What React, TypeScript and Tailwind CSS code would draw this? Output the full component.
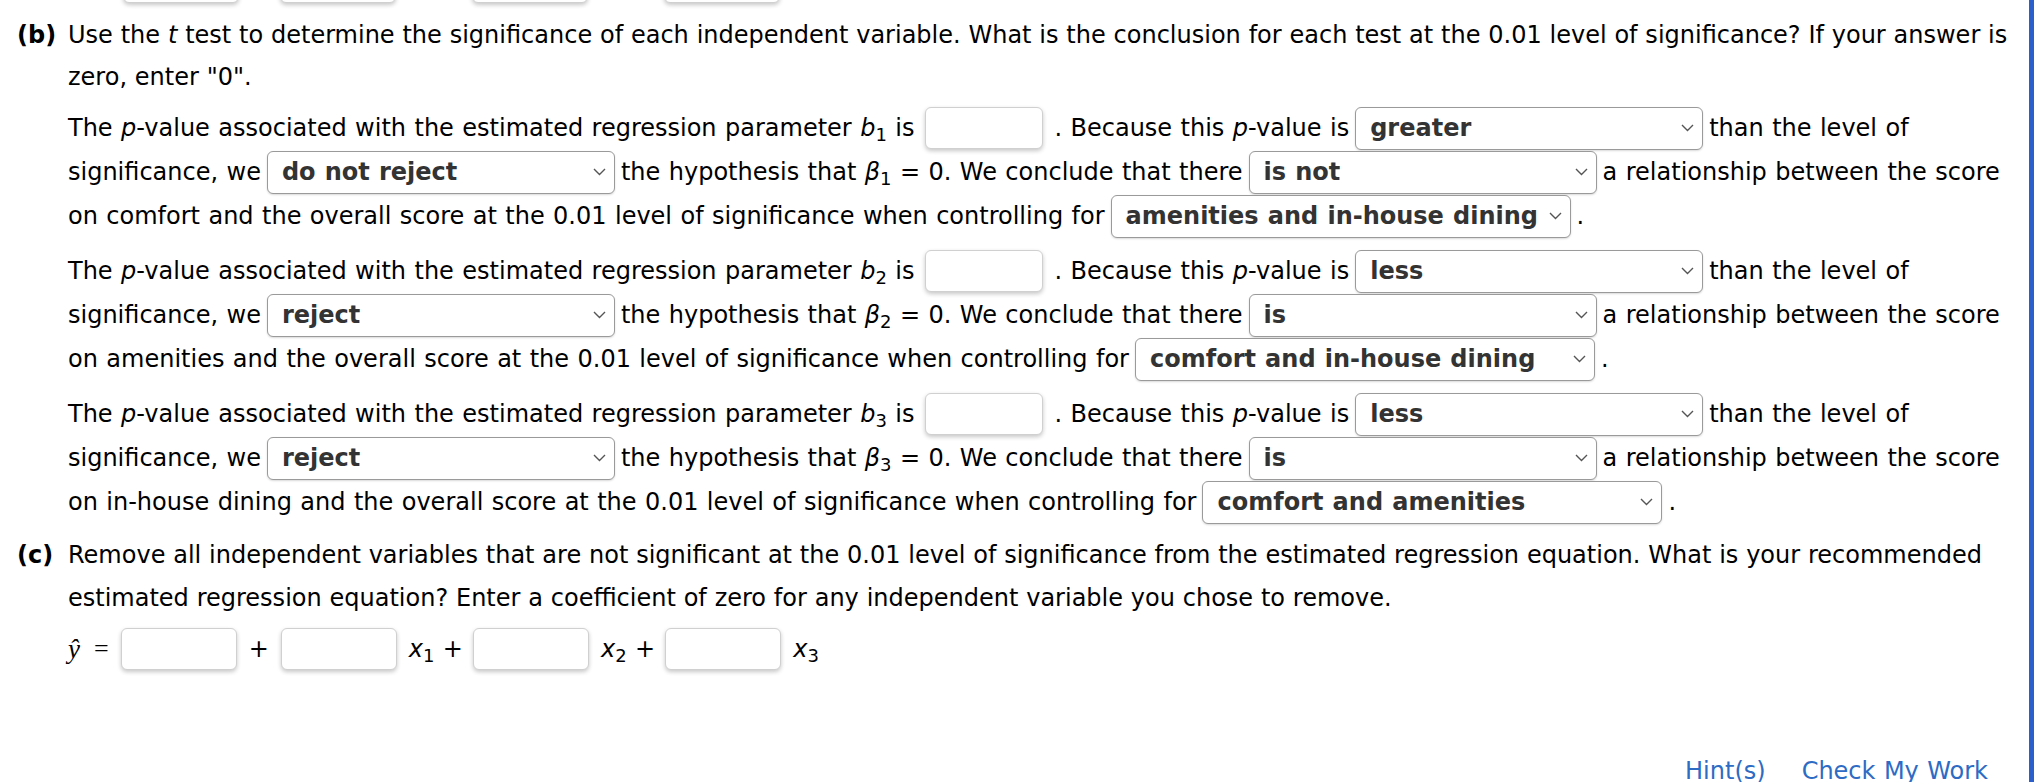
import React from 'react'

function Blank() {
  return (
    <span className="inline-block w-[118px] h-[42px] mx-[11px] rounded-[6px] border-[1.5px] border-[#d0d0d0] bg-white shadow-[0_2px_4px_rgba(0,0,0,0.22)]" />
  )
}

function Chevron() {
  return (
    <svg width="13" height="8" viewBox="0 0 13 8" className="shrink-0">
      <path d="M1 1 L6.5 6.5 L12 1" fill="none" stroke="#555" strokeWidth="1.4" />
    </svg>
  )
}

function Choice({ value, wide }: { value: string; wide?: boolean }) {
  return (
    <span
      className={`inline-flex items-center justify-between h-[43px] mx-[6px] pl-[14px] pr-[8px] rounded-[6px] border-[1.5px] border-[#9a9a9a] bg-white font-bold text-[#333] shadow-[0_1px_2px_rgba(0,0,0,0.15)] ${
        wide ? 'w-[460px]' : 'w-[348px]'
      }`}
    >
      <span>{value}</span>
      <Chevron />
    </span>
  )
}

function Row({ children }: { children: React.ReactNode }) {
  return <div className="flex items-center h-[44px] leading-[44px] whitespace-pre">{children}</div>
}

interface Part {
  b: string
  verdict: string
  action: string
  relation: string
  topic: string
  controls: string
}

const parts: Part[] = [
  {
    b: '1',
    verdict: 'greater',
    action: 'do not reject',
    relation: 'is not',
    topic: 'comfort',
    controls: 'amenities and in-house dining',
  },
  {
    b: '2',
    verdict: 'less',
    action: 'reject',
    relation: 'is',
    topic: 'amenities',
    controls: 'comfort and in-house dining',
  },
  {
    b: '3',
    verdict: 'less',
    action: 'reject',
    relation: 'is',
    topic: 'in-house dining',
    controls: 'comfort and amenities',
  },
]

function Paragraph({ part, className }: { part: Part; className?: string }) {
  return (
    <div className={className}>
      <Row>
        <span>
          The <i>p</i>-value associated with the estimated regression parameter <i>b</i>
          <sub>{part.b}</sub> is
        </span>
        <Blank />
        <span>
          . Because this <i>p</i>-value is
        </span>
        <Choice value={part.verdict} />
        <span>than the level of</span>
      </Row>
      <Row>
        <span>significance, we</span>
        <Choice value={part.action} />
        <span>
          the hypothesis that <i>β</i>
          <sub>{part.b}</sub> = 0. We conclude that there
        </span>
        <Choice value={part.relation} />
        <span>a relationship between the score</span>
      </Row>
      <Row>
        <span>
          on {part.topic} and the overall score at the 0.01 level of significance when controlling for
        </span>
        <Choice value={part.controls} wide />
        <span>.</span>
      </Row>
    </div>
  )
}

function EqBlank() {
  return (
    <span className="inline-block shrink-0 w-[116px] h-[42px] rounded-[6px] border-[1.5px] border-[#d0d0d0] bg-white shadow-[0_2px_4px_rgba(0,0,0,0.22)]" />
  )
}

export default function App() {
  return (
    <div className="relative w-[2034px] h-[782px] overflow-hidden bg-white text-black text-[24px] font-['DejaVu_Sans',sans-serif] [word-spacing:0.8px]">
      {/* bottom edge of the equation row above, scrolled off */}
      <div className="flex items-end h-[3px] pl-[123px]">
        <EqBlank />
        <div className="w-[41px] shrink-0" />
        <EqBlank />
        <div className="w-[76px] shrink-0" />
        <EqBlank />
        <div className="w-[76px] shrink-0" />
        <EqBlank />
      </div>

      <div className="pt-[11px] pl-[17px] flex">
        <div className="w-[51px] shrink-0 font-bold leading-[42px]">(b)</div>
        <div>
          <div className="leading-[42px] [word-spacing:0.2px]">
            Use the <i>t</i> test to determine the significance of each independent variable. What is the conclusion for each test at the 0.01 level of significance? If your answer is
            <br />
            zero, enter "0".
          </div>
          <Paragraph part={parts[0]} className="mt-[8px]" />
          <Paragraph part={parts[1]} className="mt-[11px]" />
          <Paragraph part={parts[2]} className="mt-[11px]" />
        </div>
      </div>

      <div className="mt-[10px] pl-[17px] flex">
        <div className="w-[51px] shrink-0 font-bold leading-[43px]">(c)</div>
        <div>
          <div className="leading-[43px] [word-spacing:0.2px]">
            Remove all independent variables that are not significant at the 0.01 level of significance from the estimated regression equation. What is your recommended
            <br />
            estimated regression equation? Enter a coefficient of zero for any independent variable you chose to remove.
          </div>
          <div className="mt-[7px] flex items-center h-[44px] leading-[44px] whitespace-pre">
            <span className="font-['Liberation_Serif',serif] italic text-[27px]">ŷ</span>
            <span className="ml-[14px] mr-[12px] font-['Liberation_Serif',serif] text-[26px]">=</span>
            <EqBlank />
            <span className="mx-[12px]">+</span>
            <EqBlank />
            <span className="ml-[12px] mr-[10px]">
              <i>x</i>
              <sub>1</sub> +
            </span>
            <EqBlank />
            <span className="ml-[12px] mr-[10px]">
              <i>x</i>
              <sub>2</sub> +
            </span>
            <EqBlank />
            <span className="mx-[12px]">
              <i>x</i>
              <sub>3</sub>
            </span>
          </div>
        </div>
      </div>

      <div className="mt-[86px] flex justify-end pr-[46px] gap-[36px] leading-[28px] text-[#2d6bc4]">
        <span>Hint(s)</span>
        <span>Check My Work</span>
      </div>

      <div className="absolute right-0 top-0 h-full w-[5px] bg-[#2b5fcb]" />
    </div>
  )
}
